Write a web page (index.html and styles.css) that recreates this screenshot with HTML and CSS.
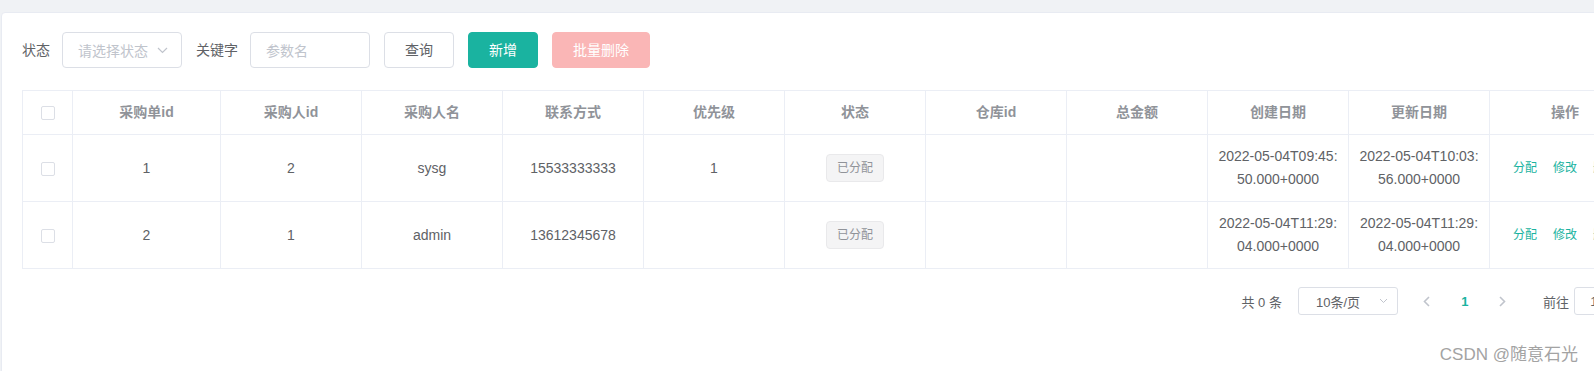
FILE: index.html
```html
<!DOCTYPE html>
<html lang="zh-CN">
<head>
<meta charset="utf-8">
<title>采购单</title>
<link rel="stylesheet" href="styles.css">
</head>
<body>
<div class="page">
  <div class="card">
    <form class="toolbar">
      <label class="label">状态</label>
      <div class="select">
        <span class="placeholder">请选择状态</span>
        <svg class="chev" width="11" height="7" viewBox="0 0 11 7"><path d="M1 1 L5.5 5.5 L10 1" fill="none" stroke="#c0c4cc" stroke-width="1.2"/></svg>
      </div>
      <label class="label">关键字</label>
      <div class="input"><span class="placeholder">参数名</span></div>
      <button type="button" class="btn">查询</button>
      <button type="button" class="btn btn-primary">新增</button>
      <button type="button" class="btn btn-danger-disabled">批量删除</button>
    </form>

    <table class="grid">
      <colgroup>
        <col class="c-check"><col class="c-first"><col class="c-std"><col class="c-std"><col class="c-std"><col class="c-std"><col class="c-std"><col class="c-std"><col class="c-std"><col class="c-std"><col class="c-std"><col class="c-op">
      </colgroup>
      <thead>
        <tr>
          <th><div class="cell"><span class="checkbox"></span></div></th>
          <th><div class="cell">采购单id</div></th>
          <th><div class="cell">采购人id</div></th>
          <th><div class="cell">采购人名</div></th>
          <th><div class="cell">联系方式</div></th>
          <th><div class="cell">优先级</div></th>
          <th><div class="cell">状态</div></th>
          <th><div class="cell">仓库id</div></th>
          <th><div class="cell">总金额</div></th>
          <th><div class="cell">创建日期</div></th>
          <th><div class="cell">更新日期</div></th>
          <th><div class="cell">操作</div></th>
        </tr>
      </thead>
      <tbody>
        <tr>
          <td><div class="cell"><span class="checkbox"></span></div></td>
          <td><div class="cell">1</div></td>
          <td><div class="cell">2</div></td>
          <td><div class="cell">sysg</div></td>
          <td><div class="cell">15533333333</div></td>
          <td><div class="cell">1</div></td>
          <td><div class="cell"><span class="tag">已分配</span></div></td>
          <td><div class="cell"></div></td>
          <td><div class="cell"></div></td>
          <td><div class="cell">2022-05-04T09:45:50.000+0000</div></td>
          <td><div class="cell">2022-05-04T10:03:56.000+0000</div></td>
          <td><div class="cell ops"><a class="op">分配</a><a class="op">修改</a><a class="op">删除</a></div></td>
        </tr>
        <tr>
          <td><div class="cell"><span class="checkbox"></span></div></td>
          <td><div class="cell">2</div></td>
          <td><div class="cell">1</div></td>
          <td><div class="cell">admin</div></td>
          <td><div class="cell">13612345678</div></td>
          <td><div class="cell"></div></td>
          <td><div class="cell"><span class="tag">已分配</span></div></td>
          <td><div class="cell"></div></td>
          <td><div class="cell"></div></td>
          <td><div class="cell">2022-05-04T11:29:04.000+0000</div></td>
          <td><div class="cell">2022-05-04T11:29:04.000+0000</div></td>
          <td><div class="cell ops"><a class="op">分配</a><a class="op">修改</a><a class="op">删除</a></div></td>
        </tr>
      </tbody>
    </table>

    <div class="pager">
      <span class="total">共 0 条</span>
      <div class="sizes">
        <span>10条/页</span>
        <svg class="chev-s" width="9" height="6" viewBox="0 0 9 6"><path d="M1 1 L4.5 4.5 L8 1" fill="none" stroke="#c0c4cc" stroke-width="1"/></svg>
      </div>
      <span class="pbtn"><svg width="7" height="11" viewBox="0 0 7 11"><path d="M6 1 L1.5 5.5 L6 10" fill="none" stroke="#c0c4cc" stroke-width="1.6"/></svg></span>
      <span class="pbtn active">1</span>
      <span class="pbtn"><svg width="7" height="11" viewBox="0 0 7 11"><path d="M1 1 L5.5 5.5 L1 10" fill="none" stroke="#c0c4cc" stroke-width="1.6"/></svg></span>
      <span class="jumper">前往<span class="jinput">1</span>页</span>
    </div>
  </div>
</div>
<div class="watermark">CSDN @随意石光</div>
</body>
</html>
```

FILE: styles.css
```css
html, body {
  margin: 0;
  padding: 0;
  overflow: hidden;
}
body {
  background: #f0f2f5;
  font-family: "Liberation Sans", "Noto Sans CJK SC", sans-serif;
  font-size: 14px;
  color: #606266;
  position: relative;
  height: 371px;
}
.page {
  padding: 12px 0 0 1px;
}
.card {
  background: #fff;
  border: 1px solid #e8ebf2;
  border-radius: 4px;
  padding: 19px 20px 0 20px;
  width: max-content;
  min-height: 420px;
  box-sizing: border-box;
}

/* toolbar */
.toolbar {
  display: flex;
  align-items: center;
  margin: 0 0 22px 0;
  height: 36px;
}
.label {
  margin-right: 12px;
  line-height: 36px;
  color: #606266;
}
.select, .input {
  width: 120px;
  height: 36px;
  box-sizing: border-box;
  border: 1px solid #dcdfe6;
  border-radius: 4px;
  padding: 0 15px;
  display: flex;
  align-items: center;
  justify-content: space-between;
  margin-right: 14px;
}
.placeholder {
  color: #c0c4cc;
}
.chev {
  margin-right: -2px;
}
.btn {
  height: 36px;
  box-sizing: border-box;
  padding: 0 20px;
  border: 1px solid #dcdfe6;
  border-radius: 4px;
  background: #fff;
  color: #606266;
  font-family: inherit;
  font-size: 14px;
  margin-right: 14px;
  line-height: 34px;
}
.btn-primary {
  background: #1ab3a0;
  border-color: #1ab3a0;
  color: #fff;
}
.btn-danger-disabled {
  background: #fab6b6;
  border-color: #fab6b6;
  color: #fff;
}

/* table */
.grid {
  table-layout: fixed;
  border-collapse: separate;
  border-spacing: 0;
  border-top: 1px solid #ebeef5;
  border-left: 1px solid #ebeef5;
  width: 1619px;
}
.c-check { width: 50px; }
.c-first { width: 148px; }
.c-std { width: 141px; }
.c-op { width: 151px; }
th, td {
  border-right: 1px solid #ebeef5;
  border-bottom: 1px solid #ebeef5;
  padding: 10px 0;
  text-align: center;
  vertical-align: middle;
}
th {
  color: #909399;
  font-weight: bold;
}
.cell {
  padding: 0 10px;
  line-height: 23px;
  word-break: break-all;
}
.checkbox {
  display: inline-block;
  width: 14px;
  height: 14px;
  box-sizing: border-box;
  border: 1px solid #dcdfe6;
  border-radius: 2px;
  background: #fff;
  vertical-align: middle;
}
.tag {
  display: inline-block;
  height: 28px;
  line-height: 26px;
  padding: 0 10px;
  box-sizing: border-box;
  font-size: 12px;
  color: #909399;
  background: #f4f4f5;
  border: 1px solid #e9e9eb;
  border-radius: 4px;
  vertical-align: middle;
}
.ops {
  display: flex;
  justify-content: center;
  gap: 16px;
  font-size: 12px;
}
.op {
  color: #1ab3a0;
  white-space: nowrap;
}

/* pagination */
.pager {
  display: flex;
  justify-content: flex-end;
  align-items: center;
  margin-top: 18px;
  height: 28px;
  font-size: 13px;
  color: #606266;
}
.total {
  margin-right: 16px;
}
.sizes {
  width: 100px;
  height: 28px;
  box-sizing: border-box;
  border: 1px solid #dcdfe6;
  border-radius: 3px;
  display: flex;
  align-items: center;
  justify-content: space-between;
  padding: 0 9px 0 17px;
  margin-right: 10px;
}
.pbtn {
  width: 38px;
  height: 28px;
  display: flex;
  align-items: center;
  justify-content: center;
}
.pbtn.active {
  color: #1ab3a0;
  font-weight: bold;
}
.jumper {
  margin-left: 21px;
  display: flex;
  align-items: center;
}
.jinput {
  width: 50px;
  height: 28px;
  box-sizing: border-box;
  border: 1px solid #dcdfe6;
  border-radius: 3px;
  margin: 0 4px 0 5px;
  padding-right: 10px;
  display: flex;
  align-items: center;
  justify-content: center;
}

.watermark {
  position: absolute;
  right: 16px;
  bottom: 5px;
  font-size: 17px;
  line-height: 22px;
  color: #a3a3a3;
}
```
